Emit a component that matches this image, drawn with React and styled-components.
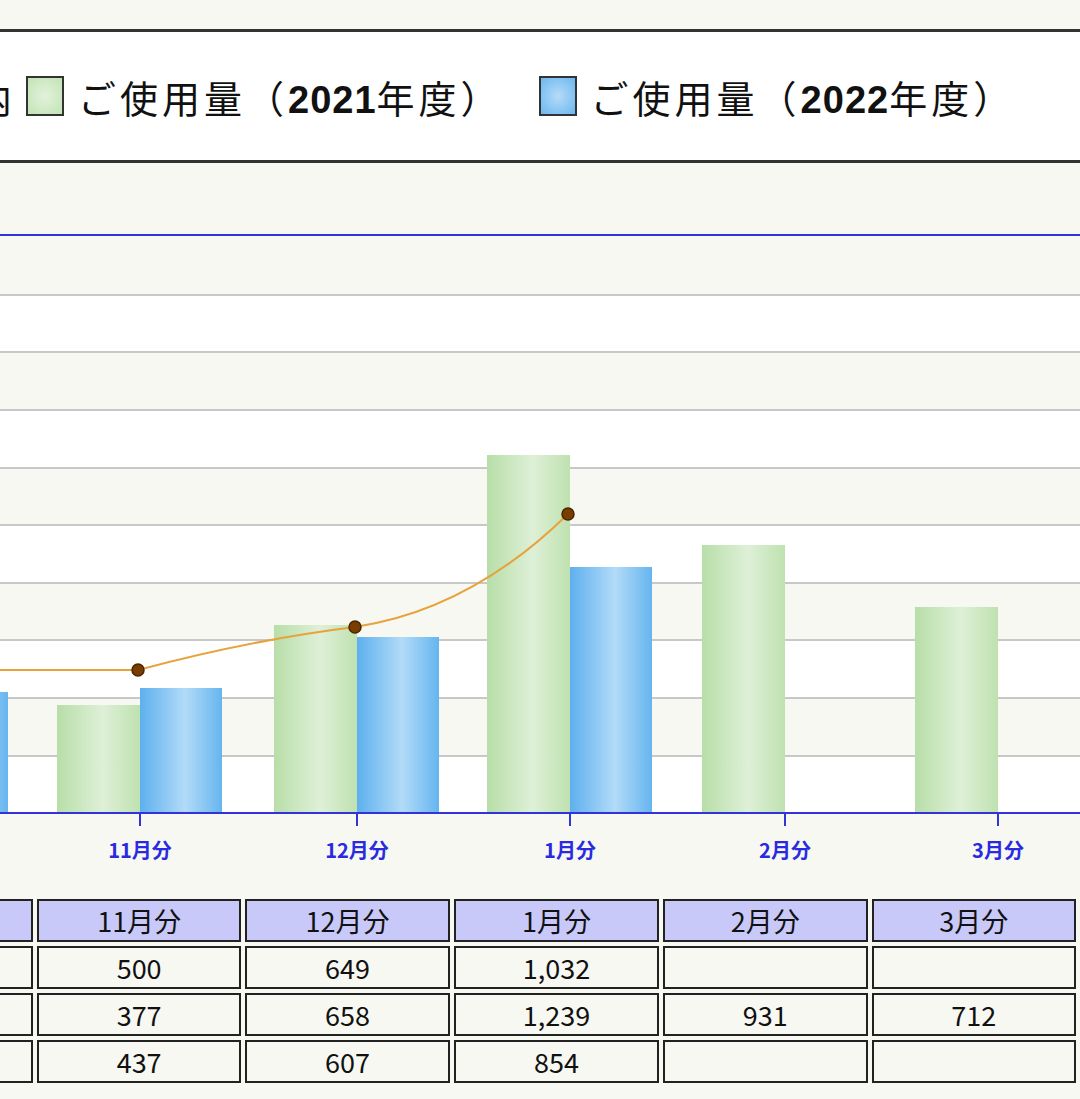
import React from 'react';
import styled, { createGlobalStyle } from 'styled-components';

const Global = createGlobalStyle`
  body { margin: 0; background: #f7f8f2; font-family: "Noto Sans CJK JP", "Noto Sans", sans-serif; overflow: hidden; }
`;

const Page = styled.div`
  width: 1080px;
  height: 1099px;
  overflow: hidden;
  padding-top: 29px;
  box-sizing: border-box;
`;

const Legend = styled.div`
  height: 128px;
  background: #fff;
  border-top: 3px solid #333;
  border-bottom: 3px solid #333;
  display: flex;
  align-items: center;
  white-space: nowrap;
  font-size: 38px;
  color: #111;
`;

const Cut = styled.span`
  margin-left: -26px;
  margin-right: 14px;
`;

const Swatch = styled.span`
  width: 34px;
  height: 36px;
  border: 2px solid #333;
  margin-right: 14px;
  background: ${p => p.blue
    ? 'radial-gradient(#b6dcf8, #6ab7f0)'
    : 'radial-gradient(#e2f2dc, #c2e3b4)'};
`;

const Item = styled.span`
  margin-right: 36px;
  letter-spacing: 4px;
  b { font-family: "Liberation Sans", Arial, sans-serif; font-weight: 700; letter-spacing: 1px; }
`;

const TableWrap = styled.div`
  margin-top: 6px;
  overflow: hidden;
`;

const Table = styled.table`
  border-collapse: separate;
  border-spacing: 4px 4px;
  margin-left: -174px;
  font-size: 27px;
  color: #111;
`;

const Td = styled.td`
  border: 2px solid #222;
  width: 206px;
  height: 39px;
  padding: 0;
  text-align: center;
  background: ${p => (p.head ? '#c8c9f8' : '#f7f8f2')};
`;

const groups = [
  { x: -76, g: null, b: 692 },
  { x: 138, g: 705, b: 688, m: '11月分' },
  { x: 355, g: 625, b: 637, m: '12月分' },
  { x: 568, g: 455, b: 567, m: '1月分' },
  { x: 783, g: 545, b: null, m: '2月分' },
  { x: 996, g: 607, b: null, m: '3月分' },
];
const base = 813;
const grid = [235, 295, 352, 410, 468, 525, 583, 640, 698, 756, 813];
const pts = [[-80, 670], [138, 670], [355, 627], [568, 514]];

function Chart() {
  const off = 163;
  return (
    <svg width="1080" height="726" viewBox={`0 ${off} 1080 726`} style={{ display: 'block' }}>
      <defs>
        <linearGradient id="gg" x1="0" x2="1">
          <stop offset="0" stopColor="#b8dea8" />
          <stop offset="0.55" stopColor="#def0d7" />
          <stop offset="1" stopColor="#bfe1b0" />
        </linearGradient>
        <linearGradient id="bg" x1="0" x2="1">
          <stop offset="0" stopColor="#5eb0ee" />
          <stop offset="0.55" stopColor="#b2dbf8" />
          <stop offset="1" stopColor="#66b5ef" />
        </linearGradient>
      </defs>
      {grid.slice(0, -1).map((y, i) => (
        <rect key={y} x="0" y={y} width="1080" height={grid[i + 1] - y} fill={i % 2 ? '#fff' : '#f7f8f2'} />
      ))}
      {grid.slice(1, -1).map(y => (
        <line key={y} x1="0" x2="1080" y1={y} y2={y} stroke="#c8c8c8" strokeWidth="2" />
      ))}
      <line x1="0" x2="1080" y1="235" y2="235" stroke="#3333dd" strokeWidth="2" />
      {groups.map(d => (
        <g key={d.x}>
          {d.g && <rect x={d.x - 81} y={d.g} width="83" height={base - d.g} fill="url(#gg)" />}
          {d.b && <rect x={d.x + 2} y={d.b} width="82" height={base - d.b} fill="url(#bg)" />}
          <line x1={d.x + 2} x2={d.x + 2} y1={base} y2={base + 13} stroke="#3333dd" strokeWidth="2" />
          {d.m && (
            <text x={d.x + 2} y="858" textAnchor="middle" fill="#2a2ae0" fontSize="20" fontWeight="700"
              fontFamily='"Noto Sans CJK JP", sans-serif'>{d.m}</text>
          )}
        </g>
      ))}
      <line x1="0" x2="1080" y1={base} y2={base} stroke="#3333dd" strokeWidth="2" />
      <path d="M-80 670 L138 670 Q250 640 355 627 Q470 610 568 514" fill="none" stroke="#e8a23c" strokeWidth="2" />
      {pts.slice(1).map(([x, y]) => (
        <circle key={x} cx={x} cy={y} r="6" fill="#7a3d00" stroke="#4a2500" strokeWidth="1.5" />
      ))}
    </svg>
  );
}

const rows = [
  ['', '11月分', '12月分', '1月分', '2月分', '3月分'],
  ['', '500', '649', '1,032', '', ''],
  ['', '377', '658', '1,239', '931', '712'],
  ['', '437', '607', '854', '', ''],
];

export default function App() {
  return (
    <Page>
      <Global />
      <Legend>
        <Cut>内</Cut>
        <Swatch />
        <Item>ご使用量（<b>2021</b>年度）</Item>
        <Swatch blue />
        <Item>ご使用量（<b>2022</b>年度）</Item>
      </Legend>
      <Chart />
      <TableWrap>
        <Table>
          <tbody>
            {rows.map((r, i) => (
              <tr key={i}>
                {r.map((c, j) => <Td key={j} head={i === 0}>{c}</Td>)}
              </tr>
            ))}
          </tbody>
        </Table>
      </TableWrap>
    </Page>
  );
}
